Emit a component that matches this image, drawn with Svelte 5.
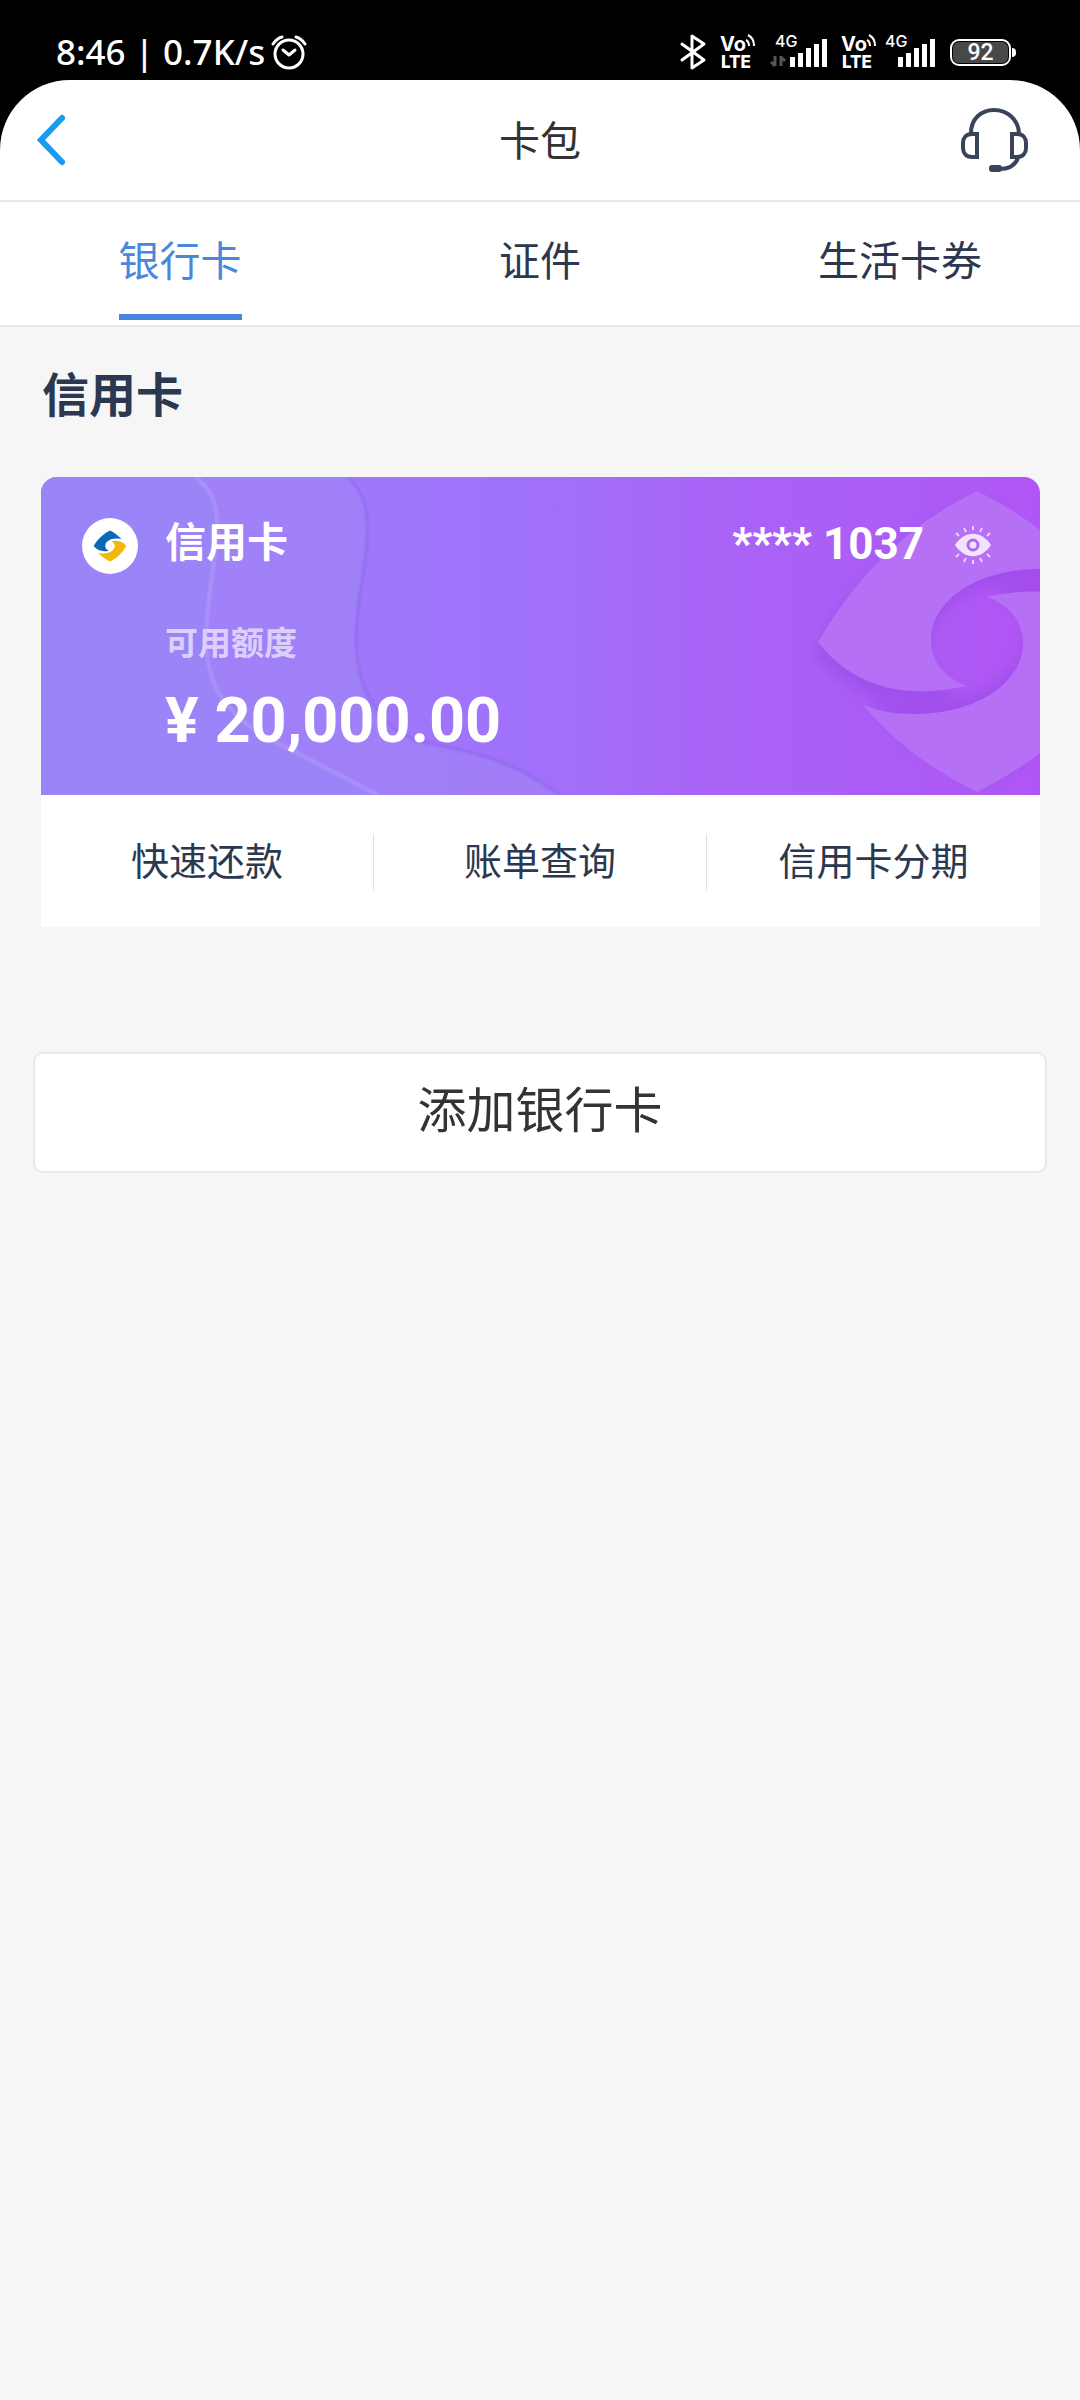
<script>
  const tabs = ['银行卡', '证件', '生活卡券'];
  const actions = ['快速还款', '账单查询', '信用卡分期'];
  let active = $state(0);
  let masked = $state(true);

  // One blade of the bank emblem; the other is the same blade turned by 180 degrees.
  const blade =
    'M177 14C118 43 63 88 18 165C55 213 110 222 167 209C145 201 131 185 131 163C131 125 175 92 240 92C260 92 278 95 292 102C262 66 222 36 177 14Z';
  const bars = [10, 14, 19, 23, 28];
</script>

{#snippet volte()}
  <svg class="icon" width="36" height="36" viewBox="0 0 36 36" aria-label="VoLTE">
    <text class="vo" x="0" y="17">Vo</text>
    <text class="lte" x="1" y="34">LTE</text>
    <path d="M26 6C28 7 29 9 29 12M28 1C32 3 34 7 34 12" fill="none" stroke="#fff" stroke-width="2" />
  </svg>
{/snippet}

{#snippet signal(x)}
  {#each bars as h, i}
    <rect x={x + i * 8} y={33 - h} width="5" height={h} fill="#fff" />
  {/each}
{/snippet}

<div class="app">
  <div class="status">
    <div class="status-left">
      <span>8:46 | 0.7K/s</span>
      <svg class="icon" width="36" height="36" viewBox="0 0 36 36" fill="none" stroke="#fff" aria-hidden="true">
        <circle cx="18" cy="20" r="14" stroke-width="3" />
        <path d="M12 16L18 21L24 16" stroke-width="3" stroke-linecap="round" stroke-linejoin="round" />
        <path d="M2 10C4 7 7 4 11 3M34 10C32 7 29 4 25 3" stroke-width="3" stroke-linecap="round" />
      </svg>
    </div>
    <div class="status-right">
      <svg class="icon" width="26" height="36" viewBox="0 0 26 36" fill="none" stroke="#fff" stroke-width="3" stroke-linejoin="round" stroke-linecap="round" aria-hidden="true">
        <path d="M2 10L24 26L12 34V2L24 10L2 26" />
      </svg>
      {@render volte()}
      <svg class="icon" width="57" height="36" viewBox="0 0 57 36" aria-hidden="true">
        <text class="net" x="5" y="13">4G</text>
        <path d="M5 22V32M5 32L1 28M11 32V22M11 23L15 27" fill="none" stroke="#555" stroke-width="3" />
        {@render signal(20)}
      </svg>
      <div class="pair">
        {@render volte()}
        <svg class="icon" width="51" height="36" viewBox="0 0 51 36" aria-hidden="true">
          <text class="net" x="0" y="13">4G</text>
          {@render signal(13)}
        </svg>
      </div>
      <div class="battery"><span>92</span></div>
    </div>
  </div>

  <header>
    <button class="back" aria-label="返回">
      <svg class="icon" width="30" height="52" viewBox="0 0 30 52" fill="none" stroke="#1a9bf0" stroke-width="6" stroke-linecap="round" stroke-linejoin="miter" aria-hidden="true">
        <path d="M26 4L5 26L26 48" />
      </svg>
    </button>
    <h1>卡包</h1>
    <button class="service" aria-label="客服">
      <svg class="icon" width="70" height="70" viewBox="0 0 70 70" fill="none" stroke="#39435a" stroke-width="4" aria-hidden="true">
        <path d="M11 28C11 14 21 5 34 5S58 14 59 28" />
        <path d="M17 29H12C6 29 3 33 3 38V43C3 48 6 52 12 52H17Z" />
        <path d="M52 29H57C63 29 66 33 66 38V43C66 48 63 52 57 52H52Z" />
        <path d="M58 53C55 61 49 64 40 64" />
        <rect x="31" y="62" width="9" height="3" rx="1" />
      </svg>
    </button>
  </header>

  <nav>
    {#each tabs as tab, i}
      <button class="tab" class:active={active === i} onclick={() => (active = i)}><span>{tab}</span></button>
    {/each}
  </nav>

  <main>
    <h2>信用卡</h2>

    <section class="card">
      <div class="face">
        <svg class="waves" width="520" height="318" viewBox="0 0 520 318" fill="none" aria-hidden="true">
          <path d="M0 0H307C322 14 327 30 326 60C325 95 315 120 315 165C316 215 342 258 385 266C440 276 475 286 518 318H0Z" fill="#a184f7" fill-opacity=".65" />
          <path d="M0 0H154C171 12 177 30 176 50C174 95 165 120 165 165C166 215 190 245 250 273L337 318H0Z" fill="#9b83f8" />
          <path class="soft" d="M307 0C322 14 327 30 326 60C325 95 315 120 315 165C316 215 342 258 385 266C440 276 475 286 518 318" stroke="#8a5fe8" stroke-opacity=".5" stroke-width="3" />
          <path class="soft" d="M154 0C171 12 177 30 176 50C174 95 165 120 165 165C166 215 190 245 250 273L337 318" stroke="#b39bfb" stroke-opacity=".65" stroke-width="4" />
        </svg>
        <svg class="watermark" width="240" height="318" viewBox="0 0 240 318" aria-hidden="true">
          <path class="blade" d={blade} />
          <path class="blade" d={blade} transform="rotate(180 177 164.500)" />
        </svg>
        <div class="content">
          <div class="top">
            <span class="logo">
              <svg class="icon" width="34" height="34" viewBox="12 6 330 316" aria-hidden="true">
                <path d={blade} fill="#0b69b3" />
                <path d={blade} fill="#f0b90a" transform="rotate(180 177 164)" />
              </svg>
            </span>
            <span class="name">信用卡</span>
            <span class="number">{masked ? '****' : '6222'} 1037</span>
            <button class="eye" aria-label="显示卡号" onclick={() => (masked = !masked)}>
              <svg class="icon" width="40" height="40" viewBox="0 0 40 40" aria-hidden="true">
                <path d="M2 20C12 5 28 5 38 20C28 35 12 35 2 20Z" fill="#f3e2fd" />
                <circle cx="20" cy="20" r="5" fill="#f3e2fd" stroke="#ad68ee" stroke-width="3" />
                <path d="M20 1V5M20 35V39M11 3L13 7M29 3L27 7M11 37L13 33M29 37L27 33M3 8L6 11M37 8L34 11M3 32L6 29M37 32L34 29" stroke="#eccffd" stroke-width="2" />
              </svg>
            </button>
          </div>
          <div class="label">可用额度</div>
          <div class="amount">¥ 20,000.00</div>
        </div>
      </div>
      <div class="actions">
        {#each actions as action}
          <button class="action">{action}</button>
        {/each}
      </div>
    </section>

    <button class="add">添加银行卡</button>
  </main>
</div>

<style>
  :global(body) {
    margin: 0;
    background: #f6f6f6;
  }
  .app {
    min-height: 100vh;
    background: #f6f6f6;
    color: #2c3850;
    font-family: Roboto, 'Noto Sans CJK SC', sans-serif;
  }
  button {
    margin: 0;
    padding: 0;
    border: 0;
    background: none;
    color: inherit;
    font: inherit;
  }
  .icon {
    display: block;
    flex: none;
    overflow: visible;
  }
  .status {
    display: flex;
    justify-content: space-between;
    align-items: center;
    box-sizing: border-box;
    height: 160px;
    margin-bottom: -80px;
    padding: 24px 64px 80px 56px;
    background: #000;
    color: #fff;
  }
  .status-left,
  .status-right,
  .pair {
    display: flex;
    align-items: center;
  }
  .status-left {
    gap: 6px;
    font: 500 35px/40px 'Noto Sans', sans-serif;
  }
  .status-right {
    gap: 14px;
  }
  .pair {
    gap: 8px;
  }
  .vo,
  .lte,
  .net {
    fill: #fff;
    font-family: Inter, sans-serif;
  }
  .vo {
    font-size: 20px;
    font-weight: 700;
  }
  .lte {
    font-size: 17px;
    font-weight: 800;
  }
  .net {
    font-size: 16px;
    font-weight: 500;
  }
  .battery {
    position: relative;
    box-sizing: border-box;
    width: 61px;
    height: 27px;
    margin-right: 5px;
    padding: 1px;
    border: 2px solid #fff;
    border-radius: 9px;
  }
  .battery span {
    display: block;
    border-radius: 6px;
    background: #484848;
    font: 500 23px/21px Roboto, sans-serif;
    text-align: center;
  }
  .battery::after {
    content: '';
    position: absolute;
    top: 7px;
    right: -7px;
    width: 4px;
    height: 9px;
    border-radius: 0 4px 4px 0;
    background: #fff;
  }
  header {
    position: relative;
    display: grid;
    grid-template-columns: 1fr auto 1fr;
    align-items: center;
    box-sizing: border-box;
    height: 122px;
    padding: 0 50px 0 36px;
    border-bottom: 2px solid #e9e9eb;
    border-radius: 70px 70px 0 0;
    background: #fff;
  }
  .back {
    justify-self: start;
  }
  .service {
    justify-self: end;
  }
  h1 {
    margin: 0;
    padding: 4px 0 0 14px;
    color: #333;
    font-size: 41px;
    font-weight: 400;
    line-height: 60px;
  }
  nav {
    display: grid;
    grid-template-columns: repeat(3, 1fr);
    border-bottom: 2px solid #e8e9ea;
    background: #fff;
  }
  .tab {
    display: flex;
    justify-content: center;
    height: 123px;
    font-size: 41px;
    line-height: 120px;
  }
  .tab span {
    height: 112px;
  }
  .tab.active {
    color: #4a86de;
  }
  .tab.active span {
    border-bottom: 6px solid #4a86de;
  }
  main {
    padding: 0 33px;
  }
  h2 {
    margin: 0;
    padding: 34px 9px 46px;
    font-size: 47px;
    font-weight: 700;
    line-height: 70px;
  }
  .card {
    margin: 0 7px 0 8px;
    background: #fff;
    border-radius: 16px 16px 0 0;
  }
  .face {
    position: relative;
    overflow: hidden;
    height: 318px;
    border-radius: 16px 16px 0 0;
    background: linear-gradient(90deg, #9e82f8 0%, #9f77fa 35%, #a16ffa 53%, #a864f6 66%, #ab5ef5 82%, #b156f6 100%);
    color: #fff;
  }
  .waves,
  .watermark {
    position: absolute;
    top: 0;
  }
  .waves {
    left: 0;
  }
  .watermark {
    right: 0;
  }
  .soft {
    filter: blur(1px);
  }
  .blade {
    fill: #b670f6;
    filter: drop-shadow(-4px 10px 8px rgba(130, 50, 215, 0.3));
  }
  .content {
    position: relative;
    padding: 36px 47px 0 124px;
  }
  .top {
    display: flex;
    align-items: center;
    height: 60px;
    font-size: 41px;
    font-weight: 700;
    line-height: 60px;
  }
  .logo {
    display: grid;
    place-items: center;
    width: 56px;
    height: 56px;
    margin: 6px 27px 0 -83px;
    border-radius: 50%;
    background: #fff;
  }
  .number {
    margin-left: auto;
    padding-top: 2px;
    font-size: 44px;
  }
  .eye {
    margin-left: 29px;
    padding-top: 4px;
  }
  .label {
    padding-top: 47px;
    color: #dbcffc;
    font-size: 33px;
    font-weight: 700;
    line-height: 48px;
  }
  .amount {
    padding-top: 13px;
    font-size: 63px;
    font-weight: 700;
    line-height: 80px;
  }
  .actions {
    display: grid;
    grid-template-columns: repeat(3, 1fr);
    padding: 39px 0 37px;
  }
  .action {
    height: 56px;
    font-size: 38px;
    line-height: 56px;
  }
  .action:not(:last-child) {
    border-right: 1px solid #e0e2e6;
  }
  .add {
    display: block;
    box-sizing: border-box;
    width: 100%;
    height: 121px;
    margin-top: 125px;
    padding-bottom: 12px;
    border: 2px solid #e8e9eb;
    border-radius: 10px;
    background: #fff;
    color: #333;
    font-size: 49px;
  }
</style>
